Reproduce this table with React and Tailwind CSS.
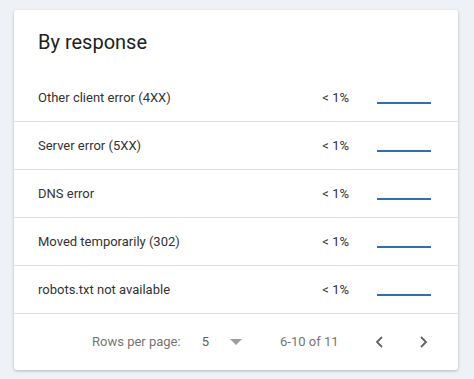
import React from "react";

const rows = [
  { label: "Other client error (4XX)", value: "< 1%" },
  { label: "Server error (5XX)", value: "< 1%" },
  { label: "DNS error", value: "< 1%" },
  { label: "Moved temporarily (302)", value: "< 1%" },
  { label: "robots.txt not available", value: "< 1%" },
];

function Sparkline() {
  return (
    <svg width="54" height="10" viewBox="0 0 54 10" className="block">
      <line x1="0" y1="7" x2="54" y2="7" stroke="#2f6fb0" strokeWidth="2" />
    </svg>
  );
}

export default function App() {
  return (
    <div
      className="h-[379px] w-[474px] bg-[#eef1f5] pl-[14px] pr-[16px] pt-[10px]"
      style={{ fontFamily: "Roboto, 'Liberation Sans', sans-serif" }}
    >
      <div className="rounded-[3px] bg-white shadow-[0_1px_3px_rgba(0,0,0,0.25)]">
        <div className="flex h-[64px] items-start pl-[24px] pt-[20px]">
          <h2 className="text-[20px] leading-[24px] text-[#212121]">By response</h2>
        </div>

        {rows.map((r) => (
          <div
            key={r.label}
            className="flex h-[48px] items-center border-b border-[#e0e0e0] pl-[24px] pr-[27px]"
          >
            <div className="flex-1 text-[13px] text-[#333]">{r.label}</div>
            <div className="w-[40px] text-right text-[13px] text-[#333]">{r.value}</div>
            <div className="ml-[28px] pt-[6px]">
              <Sparkline />
            </div>
          </div>
        ))}

        <div className="flex h-[56px] items-center pl-[78px] text-[13px] text-[#757575]">
          <span>Rows per page:</span>
          <span className="ml-[21px] text-[#5f5f5f]">5</span>
          <svg width="12" height="6" viewBox="0 0 12 6" className="ml-[21px]">
            <path d="M0 0 L12 0 L6 6 Z" fill="#9e9e9e" />
          </svg>
          <span className="ml-[38px]">6-10 of 11</span>
          <svg width="10" height="12" viewBox="0 0 10 12" className="ml-[36px]">
            <path d="M7 1 L2 6 L7 11" fill="none" stroke="#616161" strokeWidth="1.8" />
          </svg>
          <svg width="10" height="12" viewBox="0 0 10 12" className="ml-[33px]">
            <path d="M3 1 L8 6 L3 11" fill="none" stroke="#616161" strokeWidth="1.8" />
          </svg>
        </div>
      </div>
    </div>
  );
}
